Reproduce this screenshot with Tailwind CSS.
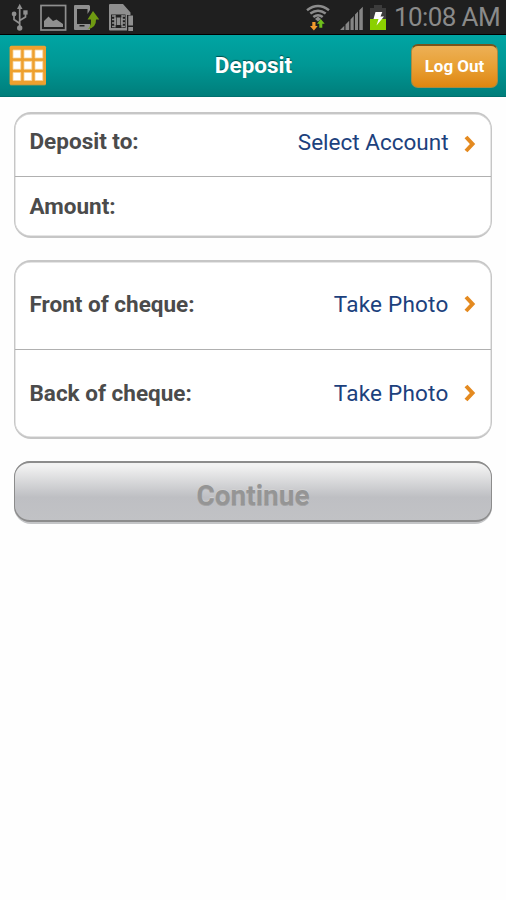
<!DOCTYPE html>
<html lang="en">
<head>
<meta charset="utf-8">
<title>Deposit</title>
<script src="https://cdn.jsdelivr.net/npm/@tailwindcss/browser@4"></script>
</head>
<body class="w-[506px] h-[900px] overflow-hidden bg-[#fefefe] font-['Roboto',sans-serif]">
<div class="h-[35px] bg-[#1f1f1f] border-b border-black flex items-start justify-between">
  <svg class="w-[140px] h-[34px]" viewBox="0 0 140 34" fill="none">
    <g stroke="#8f8f8f" stroke-width="1.7">
      <path d="M19.7 7V28M19.7 23.5L14 19.5V14M19.7 20.5L25.5 17V12"/>
    </g>
    <g fill="#8f8f8f">
      <path d="M19.7 3.8L22.5 9H17z"/><circle cx="14.1" cy="14" r="2.4"/><rect x="23.3" y="10.3" width="4.3" height="4.3"/><circle cx="19.7" cy="28" r="2.7"/>
      <path d="M44 27V21L48.5 16.5L53 21L56.500 19.500L63 24V27z"/>
      <path fill-rule="evenodd" d="M75 5H89L90 6V10L87.500 14V9H77V24H90V30H75Q74 30 74 29V6Q74 5 75 5zM79.500 25V26.500H84.500V25z"/>
      <path fill-rule="evenodd" d="M110 4H123L130.500 12.500V15H127V30.500H110Q109 30.500 109 29.500V5Q109 4 110 4zM111 14.500V28H125.500V14.500z"/>
      <path d="M128.300 15.500H133V25.500H128.300zM128.300 27H133V31H128.300z"/>
      <path d="M114.500 17.500H122.500V25H114.500z"/>
    </g>
    <rect x="41" y="5.500" width="24.600" height="24.500" stroke="#8f8f8f" stroke-width="1.700"/>
    <path d="M93 11L99.300 19.500H96Q96.500 27.500 87.500 29.500Q91.500 26 91 19.500H87.500z" fill="#6f9a12"/>
    <path d="M112 16H115M112 19.500H115M112 23H115M112 26.500H115M122 16H125M122 19.500H125M122 23H125M122 26.500H125M115 15V27.500M122 15V27.500" stroke="#8f8f8f" stroke-width="1.300"/>
    <path d="M116.500 17V25.500M120.500 17V25.500" stroke="#333" stroke-width=".8"/>
  </svg>
  <div class="flex">
    <svg class="w-[90px] h-[34px]" viewBox="300 0 90 34" fill="none">
      <g stroke="#8c8c8c" stroke-width="2.500">
        <path d="M307 10.200Q318 1.800 329 10.200M310.300 13.600Q318 7.800 325.700 13.600M313.300 17Q318 13.400 322.700 17"/>
      </g>
      <path d="M318 16.500L321 19L318 21.500L315 19z" fill="#8c8c8c"/>
      <path d="M312.300 22H315.500V26H317.700L313.900 30.500L310 26H312.300z" fill="#f39a2d"/>
      <path d="M319.300 27.800H322.300V23.800H324.700L320.800 19L317 23.800H319.300z" fill="#6fc01c"/>
      <path d="M340 30L344.300 25.800V30zM345.500 24.500L349.200 20.800V30H345.500zM350.500 19.500L353.700 16V30H350.500zM355 14.600L358 11.500V30H355zM359.300 10.200L362.800 6.700V30H359.300z" fill="#858585"/>
      <path d="M370 8H374V5H382V8H386V19H370z" fill="#3c3c3c"/>
      <rect x="370" y="19" width="16" height="11" fill="#8bd000"/>
      <path d="M375.500 12H382.300L380.500 16.500H384L376.500 25.500L378.500 19H373.500z" fill="#fff"/>
    </svg>
    <span class="w-[116px] pl-[4px] text-[26px] leading-[35px] text-[#8a8a8a] whitespace-nowrap font-normal tracking-[-.6px]">10:08 AM</span>
  </div>
</div>
<header class="h-[62px] grid grid-cols-[1fr_auto_1fr] items-center bg-linear-to-b from-[#00a5a3] via-[#009794] to-[#007e7b] border-b border-[#00706f] pl-[9px] pr-[8px]">
  <svg class="w-[38px] h-[41px]" viewBox="0 0 38 41">
    <rect x=".7" y="1.500" width="36.300" height="39" rx="1.500" fill="#8b9650"/>
    <rect x=".7" y=".7" width="36.300" height="39" rx="1.500" fill="#eea02e"/>
    <g fill="#fff" stroke="#f8d193" stroke-width=".8"><path d="M4 5h7.800v8H4zM15 5h7.800v8H15zM26 5h7.800v8H26zM4 16.300h7.800v8H4zM15 16.300h7.800v8H15zM26 16.300h7.800v8H26zM4 27.500h7.800v8H4zM15 27.500h7.800v8H15zM26 27.500h7.800v8H26z"/></g>
  </svg>
  <h1 class="text-white font-bold text-[22.500px] leading-[26px] pb-[2px] [text-shadow:0_-1px_1px_#00504f]">Deposit</h1>
  <button class="justify-self-end w-[87px] h-[44px] rounded-[7px] border border-t-2 border-[#a58b45] border-t-[#79531a] bg-linear-to-b from-[#edb055] via-[#e8a033] to-[#df860c] text-white font-bold text-[17px] leading-[20px] whitespace-nowrap">Log Out</button>
</header>
<main class="px-[14px] pt-[15px]">
  <section class="h-[126px] rounded-[17px] border border-t-2 border-b-2 border-[#c6c6c6] shadow-[inset_0_0_0_.5px_#ccc] bg-white text-[22.500px] leading-[28px]">
    <div class="h-[63px] pb-[8px] pl-[14.500px] pr-[15px] flex items-center border-b border-[#b0b0b0]">
      <span class="font-bold text-[#4b4b4b]">Deposit to:</span>
      <span class="ml-auto text-[#1c417d] pt-[2px]">Select Account</span>
      <svg class="ml-[15.500px] mt-[5px] w-[12px] h-[20px]" viewBox="0 0 12 20" fill="none"><path d="M2 3L8.500 10L2 17" stroke="#e48a20" stroke-width="4"/></svg>
    </div>
    <div class="h-[59px] pb-[2px] pl-[14.500px] flex items-center font-bold text-[#4b4b4b]">Amount:</div>
  </section>
  <section class="mt-[22px] h-[179px] rounded-[17px] border border-t-2 border-b-2 border-[#c6c6c6] shadow-[inset_0_0_0_.5px_#ccc] bg-white text-[22.500px] leading-[28px]">
    <div class="h-[88px] pl-[14.500px] pr-[15px] flex items-center border-b border-[#b0b0b0] pb-[3px]">
      <span class="font-bold text-[#4b4b4b]">Front of cheque:</span>
      <span class="ml-auto text-[#1c417d] tracking-[.22px]">Take Photo</span>
      <svg class="ml-[15.500px] w-[12px] h-[20px]" viewBox="0 0 12 20" fill="none"><path d="M2 3L8.500 10L2 17" stroke="#e48a20" stroke-width="4"/></svg>
    </div>
    <div class="h-[87px] pl-[14.500px] pr-[15px] pb-[2px] flex items-center">
      <span class="font-bold text-[#4b4b4b]">Back of cheque:</span>
      <span class="ml-auto text-[#1c417d] tracking-[.22px]">Take Photo</span>
      <svg class="ml-[15.500px] w-[12px] h-[20px]" viewBox="0 0 12 20" fill="none"><path d="M2 3L8.500 10L2 17" stroke="#e48a20" stroke-width="4"/></svg>
    </div>
  </section>
  <div class="mt-[22px] h-[63px] rounded-[17px] bg-[#c4c5c7] pb-[2px]">
    <button class="block w-full h-[61px] rounded-[16px] border border-t-2 border-b-2 border-[#8c8c8c] bg-linear-to-b from-[#f2f2f2] from-5% via-[#bebfc3] via-60% to-[#c1c2c5] text-[#959595] font-bold text-[28px] leading-[34px] pt-[8px] [text-shadow:0_-1px_0_#d2d2d2,0_1px_0_#88888880]">Continue</button>
  </div>
</main>
</body>
</html>
